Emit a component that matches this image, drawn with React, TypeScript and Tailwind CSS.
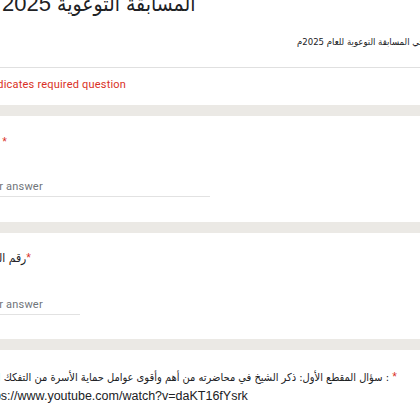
import { ReactNode } from "react";

const ar = "font-['DejaVu_Sans_Condensed','DejaVu_Sans',sans-serif]";

const Band = () => <div className="h-[11px] bg-[#ebe9e5]" />;

function Required() {
  return <span className="font-['Liberation_Sans',sans-serif] text-[#d93025]">*</span>;
}

function QuestionCard({ children }: { children: ReactNode }) {
  return <div className="bg-white">{children}</div>;
}

function ShortAnswer({ width }: { width: string }) {
  return (
    <input
      type="text"
      placeholder="Your answer"
      className={`${width} block h-[19px] border-b border-[#e2e2e2] bg-transparent pb-[2px] font-['Roboto',sans-serif] text-[11px] leading-[16px] tracking-[0.2px] outline-none placeholder:text-[#70757a]`}
    />
  );
}

export default function App() {
  return (
    <div className="h-[420px] w-[420px] overflow-hidden bg-white font-['Liberation_Sans','DejaVu_Sans',sans-serif] text-[#202124]">
      <div className="ml-[-20px] w-[760px]">
        {/* form header */}
        <div className="mt-[-14px]">
          <h1 className="pl-[16px] text-[22px] leading-[36px]">
            <span className={`${ar} text-[21px]`}>المسابقة التوعوية</span>
            <span className="pl-[6px]"> 2025</span>
          </h1>
          <p
            dir="rtl"
            className={`${ar} mt-[12px] whitespace-nowrap pl-[317px] text-left text-[9.5px] leading-[16px]`}
          >
            نرحب بكم أيها الطلاب في المسابقة التوعوية للعام 2025م
          </p>
          <div className="mt-[17px] border-t border-[#e0e0e0] pt-[9px] pb-[12px]">
            <p className="font-['Roboto',sans-serif] text-[11px] leading-[16px] tracking-[0.2px] text-[#d93025]">
              * Indicates required question
            </p>
          </div>
        </div>

        <Band />

        <QuestionCard>
          <div className="pt-[17px] pb-[25px]">
            <div dir="rtl" className={`${ar} w-[27px] whitespace-nowrap text-[12px] leading-[19px]`}>
              <Required /> الاسم الثلاثي
            </div>
            <div className="mt-[26px]">
              <ShortAnswer width="w-[230px]" />
            </div>
          </div>
        </QuestionCard>

        <Band />

        <QuestionCard>
          <div className="pt-[16px] pb-[24px]">
            <div dir="rtl" className={`${ar} w-[51px] whitespace-nowrap text-[12px] leading-[19px]`}>
              <Required />
              رقم الجوال
            </div>
            <div className="mt-[28px]">
              <ShortAnswer width="w-[100px]" />
            </div>
          </div>
        </QuestionCard>

        <Band />

        <QuestionCard>
          <div className="pt-[18px]">
            <div dir="rtl" className="w-[417px] whitespace-nowrap text-[12px] leading-[19px]">
              <Required />{" "}
              <span className={`${ar} text-[11px]`}>
                : سؤال المقطع الأول: ذكر الشيخ في محاضرته من أهم وأقوى عوامل حماية الأسرة من التفكك الأسري والانحراف
              </span>
            </div>
            <div className="text-[12.5px] leading-[19px]">
              https://www.youtube.com/watch?v=daKT16fYsrk
            </div>
          </div>
        </QuestionCard>
      </div>
    </div>
  );
}
